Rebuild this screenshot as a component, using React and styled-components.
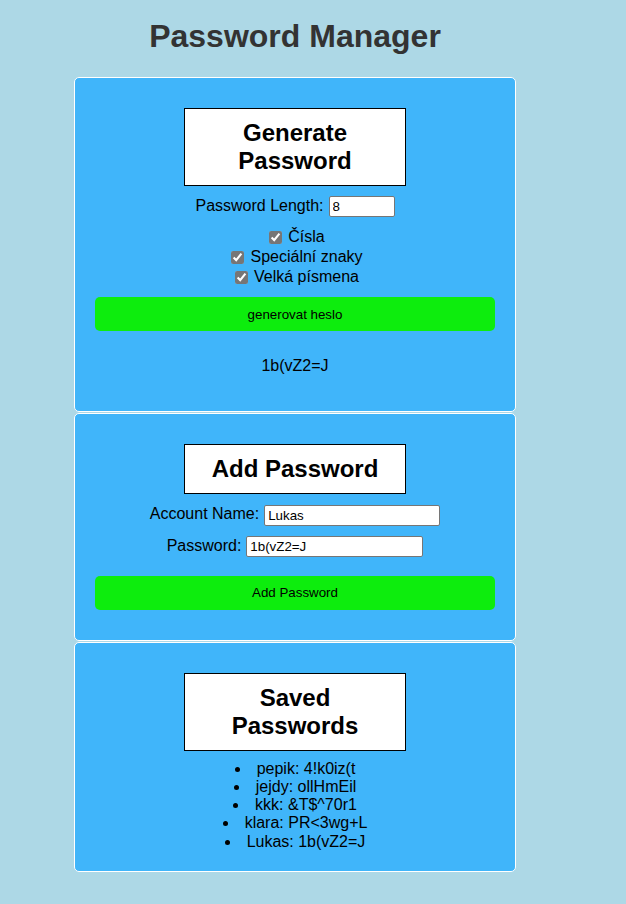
import React, { useState } from 'react';
import styled, { createGlobalStyle } from 'styled-components';

const GlobalStyle = createGlobalStyle`
  * {
    box-sizing: border-box;
  }

  body {
    margin: 0;
    background: #add8e6;
    font-family: "Liberation Sans", Arial, sans-serif;
    color: #000;
  }
`;

const Page = styled.div`
  width: 590px;
  padding-bottom: 30px;
`;

const Title = styled.h1`
  margin: 18px 0 22px;
  text-align: center;
  font-size: 32px;
  font-weight: bold;
  color: #333;
`;

const Card = styled.section`
  width: 442px;
  margin: 0 auto 1px;
  padding: 20px;
  background: #40b5fa;
  border: 1px solid #fff;
  border-radius: 5px;
  text-align: center;
`;

const CardTitle = styled.h2`
  width: 222px;
  margin: 10px auto;
  padding: 10px;
  background: #fff;
  border: 1px solid #000;
  font-size: 24px;
  line-height: 28px;
  font-weight: bold;
`;

const Row = styled.div`
  margin-bottom: ${(p) => (p.$gap ? p.$gap : 0)}px;
  font-size: 16px;
  line-height: 20px;
`;

const TextInput = styled.input`
  width: ${(p) => p.$w}px;
  height: 21px;
  margin-left: 5px;
  padding: 1px 3px;
  border: 1px solid #767676;
  border-radius: 2px;
  font-family: "Liberation Sans", Arial, sans-serif;
  font-size: 13.33px;
  vertical-align: middle;
`;

const Check = styled.input`
  width: 13px;
  height: 13px;
  margin: 3px 6px 3px 4px;
  accent-color: #767676;
  vertical-align: -2px;
`;

const Button = styled.button`
  display: block;
  width: 100%;
  height: 34px;
  margin: ${(p) => (p.$top ? p.$top : 10)}px 0 10px;
  border: none;
  border-radius: 5px;
  background: #0ded0d;
  color: #000;
  font-family: "Liberation Sans", Arial, sans-serif;
  font-size: 13.33px;
  cursor: pointer;
`;

const Result = styled.p`
  margin: 25px 0 16px;
  font-size: 16px;
  line-height: 19px;
`;

const List = styled.ul`
  margin: -1px 0 0;
  padding: 0;
  list-style: disc inside;
  font-size: 16px;
  line-height: 18.2px;
`;

const saved = [
  { name: 'pepik', pass: '4!k0iz(t' },
  { name: 'jejdy', pass: 'ollHmEil' },
  { name: 'kkk', pass: '&T$^70r1' },
  { name: 'klara', pass: 'PR<3wg+L' },
  { name: 'Lukas', pass: '1b(vZ2=J' },
];

const App = () => {
  const [length, setLength] = useState('8');
  const [account, setAccount] = useState('Lukas');
  const [password, setPassword] = useState('1b(vZ2=J');

  return (
    <Page>
      <GlobalStyle />
      <Title>Password Manager</Title>

      <Card>
        <CardTitle>Generate Password</CardTitle>
        <Row $gap={10}>
          Password Length:
          <TextInput $w={66} value={length} onChange={(e) => setLength(e.target.value)} />
        </Row>
        <Row>
          <label><Check type="checkbox" defaultChecked />Čísla</label>
        </Row>
        <Row>
          <label><Check type="checkbox" defaultChecked />Speciální znaky</label>
        </Row>
        <Row>
          <label><Check type="checkbox" defaultChecked />Velká písmena</label>
        </Row>
        <Button>generovat heslo</Button>
        <Result>1b(vZ2=J</Result>
      </Card>

      <Card>
        <CardTitle>Add Password</CardTitle>
        <Row $gap={10}>
          Account Name:
          <TextInput $w={176} value={account} onChange={(e) => setAccount(e.target.value)} />
        </Row>
        <Row $gap={10}>
          Password:
          <TextInput $w={177} value={password} onChange={(e) => setPassword(e.target.value)} />
        </Row>
        <Button $top={19}>Add Password</Button>
      </Card>

      <Card>
        <CardTitle>Saved Passwords</CardTitle>
        <List>
          {saved.map((s) => (
            <li key={s.name}>{s.name}: {s.pass}</li>
          ))}
        </List>
      </Card>
    </Page>
  );
};

export default App;
